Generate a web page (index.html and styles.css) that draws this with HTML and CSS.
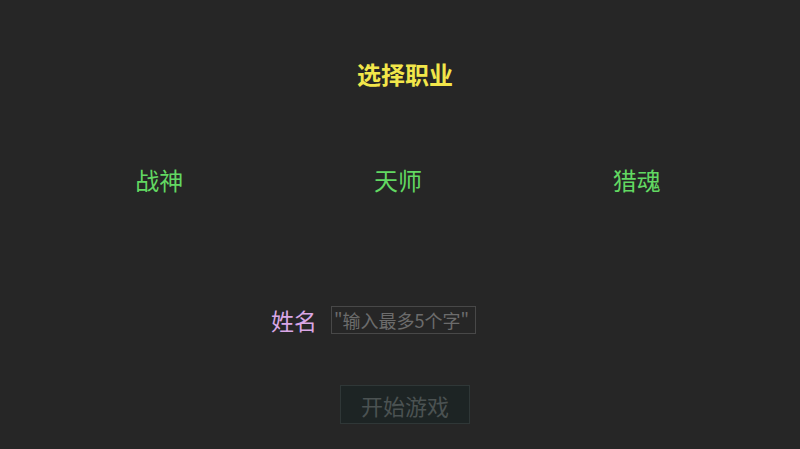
FILE: index.html
```html
<!DOCTYPE html>
<html lang="zh">
<head>
<meta charset="utf-8">
<link rel="stylesheet" href="styles.css">
</head>
<body>
<div class="screen">
  <h1 class="title">选择职业</h1>
  <div class="classes">
    <div class="cls">战神</div>
    <div class="cls">天师</div>
    <div class="cls">猎魂</div>
  </div>
  <div class="name-row">
    <label class="name-label" for="nm">姓名</label>
    <input id="nm" class="name-input" type="text" placeholder="&quot;输入最多5个字&quot;">
  </div>
  <div class="btn-row">
    <button class="start">开始游戏</button>
  </div>
</div>
</body>
</html>
```

FILE: styles.css
```css
html, body {
  margin: 0;
  padding: 0;
  background: #262626;
}
body {
  font-family: "Noto Sans CJK SC", "Noto Sans", sans-serif;
}
.screen {
  width: 800px;
  height: 449px;
  display: flex;
  flex-direction: column;
  overflow: hidden;
}
.title {
  margin: 59px 0 0 0;
  height: 30px;
  line-height: 30px;
  font-size: 24px;
  font-weight: bold;
  color: #f2e64a;
  text-align: center;
  padding-left: 10px;
}
.classes {
  margin: 76px auto 0;
  width: 716px;
  display: grid;
  grid-template-columns: repeat(3, 1fr);
  transform: translateX(-2px);
}
.cls {
  height: 30px;
  line-height: 30px;
  font-size: 24px;
  color: #62d862;
  text-align: center;
}
.name-row {
  margin-top: 110px;
  display: flex;
  justify-content: center;
  align-items: center;
  gap: 14px;
  padding-right: 53px;
  height: 30px;
}
.name-label {
  font-size: 23px;
  line-height: 30px;
  color: #d9a6e6;
}
.name-input {
  box-sizing: border-box;
  width: 145px;
  height: 28px;
  margin: 0;
  padding: 0 2px;
  border: 1px solid #484848;
  background: #262626;
  font-family: "Noto Sans CJK SC", "Noto Sans", sans-serif;
  font-size: 18px;
  color: #888;
  outline: none;
}
.name-input::placeholder {
  color: #6c6c6c;
}
.btn-row {
  margin-top: 50px;
  display: flex;
  justify-content: center;
  padding-left: 10px;
}
.start {
  box-sizing: border-box;
  width: 130px;
  height: 39px;
  margin: 0;
  padding: 0;
  background: #1d2424;
  border: 1px solid #2f3737;
  font-family: "Noto Sans CJK SC", "Noto Sans", sans-serif;
  font-size: 22px;
  color: #4b5252;
}
```
